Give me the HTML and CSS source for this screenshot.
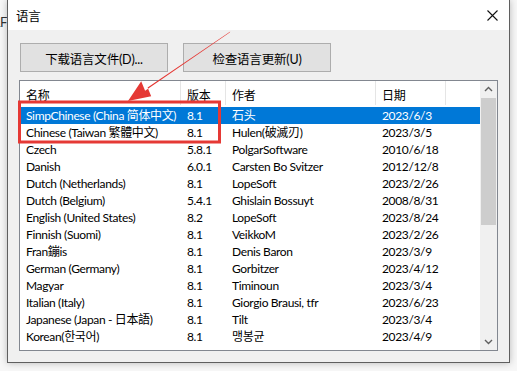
FILE: index.html
```html
<!DOCTYPE html>
<html>
<head>
  <meta charset="utf-8">
  <title>语言</title>
  <link rel="stylesheet" href="styles.css">
</head>
<body>
  <div class="page">
    <div class="behind"><span>LF</span></div>
    <div class="window">
      <div class="titlebar">
        <span class="title">语言</span>
        <svg class="close" width="11" height="11" viewBox="0 0 11 11">
          <path d="M0.5 0.5 L10.5 10.5 M10.5 0.5 L0.5 10.5" stroke="#111" stroke-width="1.1" fill="none"/>
        </svg>
      </div>
      <div class="content">
        <div class="buttons">
          <button class="btn">下载语言文件(D)...</button>
          <button class="btn">检查语言更新(U)</button>
        </div>
        <div class="list">
          <div class="table">
            <div class="row head">
              <div>名称</div><div>版本</div><div>作者</div><div>日期</div>
            </div>
            <div class="rows">
              <div class="row selected"><div>SimpChinese (China 简体中文)</div><div>8.1</div><div>石头</div><div>2023/6/3</div></div>
              <div class="row"><div>Chinese (Taiwan 繁體中文)</div><div>8.1</div><div>Hulen(破滅刃)</div><div>2023/3/5</div></div>
              <div class="row"><div>Czech</div><div>5.8.1</div><div>PolgarSoftware</div><div>2010/6/18</div></div>
              <div class="row"><div>Danish</div><div>6.0.1</div><div>Carsten Bo Svitzer</div><div>2012/12/8</div></div>
              <div class="row"><div>Dutch (Netherlands)</div><div>8.1</div><div>LopeSoft</div><div>2023/2/26</div></div>
              <div class="row"><div>Dutch (Belgium)</div><div>5.4.1</div><div>Ghislain Bossuyt</div><div>2008/8/31</div></div>
              <div class="row"><div>English (United States)</div><div>8.2</div><div>LopeSoft</div><div>2023/8/24</div></div>
              <div class="row"><div>Finnish (Suomi)</div><div>8.1</div><div>VeikkoM</div><div>2023/2/26</div></div>
              <div class="row"><div>Fran鏰is</div><div>8.1</div><div>Denis Baron</div><div>2023/3/9</div></div>
              <div class="row"><div>German (Germany)</div><div>8.1</div><div>Gorbitzer</div><div>2023/4/12</div></div>
              <div class="row"><div>Magyar</div><div>8.1</div><div>Timinoun</div><div>2023/3/4</div></div>
              <div class="row"><div>Italian (Italy)</div><div>8.1</div><div>Giorgio Brausi, tfr</div><div>2023/6/23</div></div>
              <div class="row"><div>Japanese (Japan - 日本語)</div><div>8.1</div><div>Tilt</div><div>2023/3/4</div></div>
              <div class="row"><div>Korean(한국어)</div><div>8.1</div><div>맹봉균</div><div>2023/4/9</div></div>
              <div class="row"><div></div><div></div><div>....</div><div></div></div>
            </div>
          </div>
          <div class="scrollbar">
            <svg class="arrow" width="17" height="17" viewBox="0 0 17 17">
              <polyline points="5,10 8.5,6.5 12,10" stroke="#606060" stroke-width="1.4" fill="none"/>
            </svg>
            <div class="track"><div class="thumb"></div></div>
            <svg class="arrow" width="17" height="17" viewBox="0 0 17 17">
              <polyline points="5,7 8.5,10.5 12,7" stroke="#606060" stroke-width="1.4" fill="none"/>
            </svg>
          </div>
        </div>
      </div>
    </div>
    <!-- red annotation drawn over the dialog -->
    <svg class="annotation" width="517" height="371" viewBox="0 0 517 371">
      <rect x="19.5" y="102" width="200" height="40" fill="none" stroke="#e53935" stroke-width="3"/>
      <polygon points="230.3,31.6 229.7,32.4 145.1,90.8 141.2,81.2 128,101 151.2,96.2 147.6,87.4" fill="#e53935"/>
    </svg>
  </div>
</body>
</html>
```

FILE: styles.css
```css
body {
  margin: 0;
  background-color: #f7f7f7;
  font-family: Lato, "Noto Sans CJK SC", sans-serif;
  font-size: 12px;
  letter-spacing: -0.35px;
  color: #000;
}
.page {
  position: relative;
  width: 517px;
  height: 371px;
  display: flex;
  overflow: hidden;
}
.behind {
  width: 7px;
  overflow: hidden;
  padding-top: 14px;
  color: #333;
  font-size: 13px;
  white-space: nowrap;
  direction: rtl;
}
.window {
  width: 501px;
  height: 362px;
  border: 1px solid #5f5f5f;
  border-top: none;
  background-color: #f0f0f0;
  box-shadow: 0 0 7px rgba(0, 0, 0, 0.25);
  display: flex;
  flex-direction: column;
}
.titlebar {
  height: 30px;
  background-color: #fff;
  display: flex;
  align-items: center;
  justify-content: space-between;
  padding: 0 11px 0 8px;
}
.title {
  font-size: 12.5px;
}
.content {
  padding: 13px 11px 0 11px;
}
.buttons {
  display: flex;
  gap: 15px;
  padding-left: 1px;
}
.btn {
  width: 148px;
  height: 29px;
  background-color: #e1e1e1;
  border: 1px solid #adadad;
  font-family: inherit;
  font-size: 12.5px;
  letter-spacing: -0.2px;
  color: #000;
  padding: 2px 0 0 0;
}
.list {
  margin-top: 8px;
  width: 477px;
  height: 269px;
  border: 1px solid #828790;
  background-color: #fff;
  display: flex;
  overflow: hidden;
}
.table {
  width: 460px;
  overflow: hidden;
}
.row {
  display: grid;
  grid-template-columns: 161px 45px 150px 70px;
  height: 17px;
  line-height: 17px;
  white-space: nowrap;
}
.row div {
  padding-left: 6px;
  overflow: hidden;
}
.head {
  height: 24px;
  line-height: 30px;
}
.head div {
  border-right: 1px solid #e5e5e5;
}
.rows {
  padding-top: 2px;
}
.selected {
  background-color: #0078d7;
  color: #fff;
}
.scrollbar {
  width: 17px;
  background-color: #f0f0f0;
  display: flex;
  flex-direction: column;
}
.track {
  flex: 1;
}
.thumb {
  margin: 0 1px;
  height: 127px;
  background-color: #cdcdcd;
}
.annotation {
  position: absolute;
  left: 0;
  top: 0;
}
```
